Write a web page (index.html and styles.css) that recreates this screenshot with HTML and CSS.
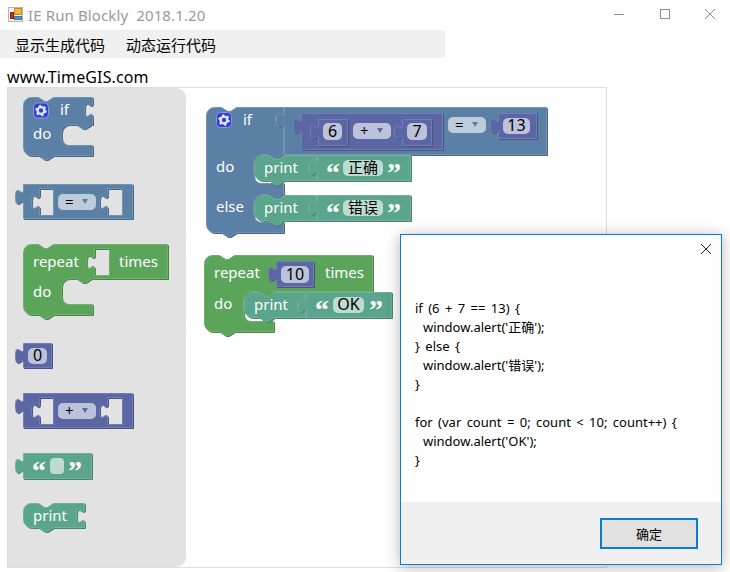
FILE: index.html
```html
<!DOCTYPE html>
<html lang="zh">
<head>
<meta charset="utf-8">
<title>IE Run Blockly</title>
<link rel="stylesheet" href="styles.css">
</head>
<body>
<div class="window">
  <header class="titlebar">
    <svg class="appicon" width="16" height="16" viewBox="0 0 16 16">
      <rect x="0.5" y="0.5" width="14" height="14" fill="#f4f4f4" stroke="#b5b5b5"/>
      <rect x="6.5" y="1.500" width="7" height="6" fill="#f0b93a" stroke="#c98a1c"/>
      <rect x="2.500" y="5.500" width="3" height="6" fill="#b3361c" stroke="#8e2a12"/>
      <rect x="6.5" y="9.500" width="7" height="3" fill="#4f8fdc" stroke="#3f70b0"/>
    </svg>
    <span class="apptitle">IE Run Blockly&nbsp; 2018.1.20</span>
    <div class="winbtns">
      <svg width="12" height="12" viewBox="0 0 12 12"><path d="M1 6.5H11" class="winstroke"/></svg>
      <svg width="12" height="12" viewBox="0 0 12 12"><rect x="1.5" y="1.5" width="9" height="9" class="winstroke"/></svg>
      <svg width="12" height="12" viewBox="0 0 12 12"><path d="M1 1L11 11M11 1L1 11" class="winstroke"/></svg>
    </div>
  </header>
  <nav class="menubar">
    <span class="menuitem">显示生成代码</span>
    <span class="menuitem">动态运行代码</span>
  </nav>
  <div class="site">www.TimeGIS.com</div>
  <div class="workspace">
    <svg class="canvas" width="598" height="479" viewBox="8 88 598 479">
      <defs>
        <g id="gear">
          <rect x="-7.5" y="-7.5" width="15" height="15" rx="4" class="gearbg"/>
          <circle r="3.4" class="gearring"/>
          <circle r="4.9" class="gearteeth"/>
        </g>
        <polygon id="tri" points="-3,0 3,0 0,5"/>
      </defs>

      <path class="flyout" d="M8,88 H176 a10,10 0 0 1 10,10 V557 a10,10 0 0 1 -10,10 H8 z"/>

      <!-- flyout -->
      <path class="blk blue" d="M23,105 a8,8 0 0 1 8,-8 h7 l6,4 3,0 6,-4 H92 v5 c0,10 -8,-8 -8,7.5 s8,-2.5 8,7.5 V124 H91 l-6,4 -3,0 -6,-4 H69 a8,8 0 0 0 -8,8 v5 a8,8 0 0 0 8,8 H92 V155 H53 l-6,4 -3,0 -6,-4 H31 a8,8 0 0 1 -8,-8 z"/>
      <use href="#gear" x="41" y="110.500"/>
      <text x="60" y="115" class="wt">if</text>
      <text x="33" y="139" class="wt">do</text>

      <path class="blk blue" fill-rule="evenodd" d="M23,184 H132 V218 H23 V204 c0,-10 -8,8 -8,-7.5 s8,2.5 8,-7.5 z M39,188 H53 V215 H39 V209 c0,-10 -8,8 -8,-7.5 s8,2.5 8,-7.5 z M107,188 H122 V215 H107 V209 c0,-10 -8,8 -8,-7.5 s8,2.5 8,-7.5 z"/>
      <rect x="58" y="194" width="38" height="16" rx="5" class="pill-blue"/>
      <text x="65" y="207" class="bk">=</text>
      <use href="#tri" x="85" y="199" class="tri-blue"/>

      <path class="blk green" fill-rule="evenodd" d="M23,252 a8,8 0 0 1 8,-8 h7 l6,4 3,0 6,-4 H167 V278 H91 l-6,4 -3,0 -6,-4 H69 a8,8 0 0 0 -8,8 v10 a8,8 0 0 0 8,8 H92 V314 H53 l-6,4 -3,0 -6,-4 H31 a8,8 0 0 1 -8,-8 z M94,248 H109 V275 H94 V269 c0,-10 -8,8 -8,-7.5 s8,2.5 8,-7.5 z"/>
      <text x="33" y="267" class="wt">repeat</text>
      <text x="119" y="267" class="wt">times</text>
      <text x="33" y="297" class="wt">do</text>

      <path class="blk purple" d="M23,343 H51 V367 H23 V363 c0,-10 -8,8 -8,-7.5 s8,2.5 8,-7.5 z"/>
      <rect x="28" y="348" width="19" height="16" rx="5" class="pill-purple"/>
      <text x="37.500" y="361" class="bk mid">0</text>

      <path class="blk purple" fill-rule="evenodd" d="M23,393 H132 V427 H23 V413 c0,-10 -8,8 -8,-7.5 s8,2.5 8,-7.5 z M39,397 H53 V424 H39 V418 c0,-10 -8,8 -8,-7.5 s8,2.5 8,-7.5 z M107,397 H122 V424 H107 V418 c0,-10 -8,8 -8,-7.5 s8,2.5 8,-7.5 z"/>
      <rect x="58" y="403" width="38" height="16" rx="5" class="pill-purple"/>
      <text x="65" y="416" class="bk">+</text>
      <use href="#tri" x="85" y="408" class="tri-purple"/>

      <path class="blk teal" d="M23,453 H91 V478 H23 V473 c0,-10 -8,8 -8,-7.5 s8,2.5 8,-7.5 z"/>
      <text x="32" y="480" class="qt">“</text>
      <rect x="50" y="458" width="14" height="16" rx="4" class="pill-teal"/>
      <text x="68" y="480" class="qt">”</text>

      <path class="blk teal" d="M23,511 a8,8 0 0 1 8,-8 h7 l6,4 3,0 6,-4 H84 v5 c0,10 -8,-8 -8,7.5 s8,-2.5 8,7.5 V527 H53 l-6,4 -3,0 -6,-4 H31 a8,8 0 0 1 -8,-8 z"/>
      <text x="33" y="521" class="wt">print</text>

      <!-- if / else -->
      <path class="blk blue" d="M206,115 a8,8 0 0 1 8,-8 h7 l6,4 3,0 6,-4 H283 v5 c0,10 -8,-8 -8,7.5 s8,-2.5 8,7.5 V154 H282 l-6,4 -3,0 -6,-4 H261 a8,8 0 0 0 -8,8 v13 a8,8 0 0 0 8,8 H283 V194 H282 l-6,4 -3,0 -6,-4 H261 a8,8 0 0 0 -8,8 v12 a8,8 0 0 0 8,8 H283 V232 H236 l-6,4 -3,0 -6,-4 H214 a8,8 0 0 1 -8,-8 z"/>
      <use href="#gear" x="224" y="120"/>
      <text x="243" y="125" class="wt">if</text>
      <text x="216" y="172" class="wt">do</text>
      <text x="216" y="212" class="wt">else</text>

      <path class="blk blue" d="M284,107 H546 V154 H284 V127 c0,-10 -8,8 -8,-7.5 s8,2.5 8,-7.5 z"/>
      <path class="blk purple" d="M301,113 H442 V149 H301 V133 c0,-10 -8,8 -8,-7.5 s8,2.5 8,-7.5 z"/>
      <path class="blk purple" d="M318,119 H347 V145 H318 V139 c0,-10 -8,8 -8,-7.5 s8,2.5 8,-7.5 z"/>
      <rect x="323" y="123" width="19" height="17" rx="5" class="pill-purple"/>
      <text x="332.500" y="137" class="bk mid">6</text>
      <rect x="353" y="123" width="38" height="16" rx="5" class="pill-purple"/>
      <text x="360" y="136" class="bk">+</text>
      <use href="#tri" x="380" y="128" class="tri-purple"/>
      <path class="blk purple" d="M402,119 H431 V145 H402 V139 c0,-10 -8,8 -8,-7.5 s8,2.5 8,-7.5 z"/>
      <rect x="407" y="123" width="20" height="17" rx="5" class="pill-purple"/>
      <text x="417" y="137" class="bk mid">7</text>
      <rect x="448" y="117" width="38" height="16" rx="5" class="pill-blue"/>
      <text x="455" y="130" class="bk">=</text>
      <use href="#tri" x="475" y="122" class="tri-blue"/>
      <path class="blk purple" d="M498,113 H536 V138 H498 V133 c0,-10 -8,8 -8,-7.5 s8,2.5 8,-7.5 z"/>
      <rect x="503" y="118" width="27" height="16" rx="5" class="pill-purple"/>
      <text x="516.500" y="131" class="bk mid">13</text>

      <path class="blk teal" d="M254,163 a8,8 0 0 1 8,-8 h7 l6,4 3,0 6,-4 H316 v5 c0,10 -8,-8 -8,7.5 s8,-2.5 8,7.5 V180 H284 l-6,4 -3,0 -6,-4 H262 a8,8 0 0 1 -8,-8 z"/>
      <text x="264" y="173" class="wt">print</text>
      <path class="blk teal" d="M317,155 H410 V180 H317 V175 c0,-10 -8,8 -8,-7.5 s8,2.5 8,-7.5 z"/>
      <text x="326" y="182" class="qt">“</text>
      <rect x="343" y="160" width="40" height="16" rx="5" class="pill-teal"/>
      <text x="363" y="173" class="bk mid cjk">正确</text>
      <text x="387" y="182" class="qt">”</text>

      <path class="blk teal" d="M254,203 a8,8 0 0 1 8,-8 h7 l6,4 3,0 6,-4 H316 v5 c0,10 -8,-8 -8,7.5 s8,-2.5 8,7.5 V220 H284 l-6,4 -3,0 -6,-4 H262 a8,8 0 0 1 -8,-8 z"/>
      <text x="264" y="213" class="wt">print</text>
      <path class="blk teal" d="M317,195 H410 V220 H317 V215 c0,-10 -8,8 -8,-7.5 s8,2.5 8,-7.5 z"/>
      <text x="326" y="222" class="qt">“</text>
      <rect x="343" y="200" width="40" height="16" rx="5" class="pill-teal"/>
      <text x="363" y="213" class="bk mid cjk">错误</text>
      <text x="387" y="222" class="qt">”</text>

      <!-- repeat -->
      <path class="blk green" d="M204,263 a8,8 0 0 1 8,-8 h7 l6,4 3,0 6,-4 H372 V291 H273 l-6,4 -3,0 -6,-4 H251 a8,8 0 0 0 -8,8 v14 a8,8 0 0 0 8,8 H273 V331 H234 l-6,4 -3,0 -6,-4 H212 a8,8 0 0 1 -8,-8 z"/>
      <text x="214" y="278" class="wt">repeat</text>
      <text x="325" y="278" class="wt">times</text>
      <text x="214" y="309" class="wt">do</text>
      <path class="blk purple" d="M276,261 H313 V286 H276 V281 c0,-10 -8,8 -8,-7.5 s8,2.5 8,-7.5 z"/>
      <rect x="281" y="266" width="28" height="17" rx="5" class="pill-purple"/>
      <text x="295" y="280" class="bk mid">10</text>
      <path class="blk teal" d="M244,300 a8,8 0 0 1 8,-8 h7 l6,4 3,0 6,-4 H305 v5 c0,10 -8,-8 -8,7.5 s8,-2.5 8,7.5 V317 H274 l-6,4 -3,0 -6,-4 H252 a8,8 0 0 1 -8,-8 z"/>
      <text x="254" y="310" class="wt">print</text>
      <path class="blk teal" d="M306,292 H391 V317 H306 V312 c0,-10 -8,8 -8,-7.5 s8,2.5 8,-7.5 z"/>
      <text x="315" y="319" class="qt">“</text>
      <rect x="333" y="297" width="31" height="16" rx="5" class="pill-teal"/>
      <text x="348.500" y="310" class="bk mid">OK</text>
      <text x="369" y="319" class="qt">”</text>
    </svg>
  </div>

  <div class="dialog">
    <svg class="dlgclose" width="12" height="12" viewBox="0 0 12 12"><path d="M1 1L11 11M11 1L1 11"/></svg>
    <div class="dlgtext">
      <div class="line">if (6 + 7 == 13) {</div>
      <div class="line ind">window.alert('正确');</div>
      <div class="line">} else {</div>
      <div class="line ind">window.alert('错误');</div>
      <div class="line">}</div>
      <div class="line gap">for (var count = 0; count &lt; 10; count++) {</div>
      <div class="line ind">window.alert('OK');</div>
      <div class="line">}</div>
    </div>
    <div class="dlgfoot"><button class="okbtn">确定</button></div>
  </div>
</div>
</body>
</html>
```
FILE: styles.css
```css
* { box-sizing: border-box; }
html, body { margin: 0; padding: 0; background: #fff; overflow: hidden; }
body { font-family: "Noto Sans", "Noto Sans CJK SC", sans-serif; }
.window { position: relative; width: 730px; height: 572px; display: flex; flex-direction: column; }

.titlebar { height: 30px; display: flex; align-items: center; padding-left: 8px; }
.appicon { flex: none; }
.apptitle { margin-left: 4px; font-size: 15px; letter-spacing: .12px; color: #999; white-space: pre; }
.winbtns { margin-left: auto; align-self: flex-start; display: flex; gap: 33.5px; padding: 8px 14px 0 0; }
.winstroke { fill: none; stroke: #8c8c8c; stroke-width: 1; }

.menubar { width: 445px; height: 28px; background: #f0f0f0; display: flex; align-items: center; gap: 21px; padding-left: 15px; }
.menuitem { font-size: 15px; color: #000; }

.site { height: 29px; padding: 9px 0 0 7px; font-size: 16px; letter-spacing: .13px; line-height: 20px; color: #000; }

.workspace { width: 600px; height: 481px; margin-left: 7px; border: 1px solid #ddd; background: #fff; }
.canvas { display: block; }
.flyout { fill: #e2e2e2; }

.blk { stroke-width: 1; transform: translate(.5px, .5px); }
.blue { fill: #5b80a5; stroke: #7392b1; filter: drop-shadow(1px 1px 0 #496684); }
.green { fill: #5ba55b; stroke: #72b072; filter: drop-shadow(1px 1px 0 #498449); }
.purple { fill: #5b67a5; stroke: #737db1; filter: drop-shadow(1px 1px 0 #495284); }
.teal { fill: #5ba58c; stroke: #72b09b; filter: drop-shadow(1px 1px 0 #498470); }

.wt, .bk { font-family: "Noto Sans", "Noto Sans CJK SC", sans-serif; font-size: 15px; }
.wt { fill: #fff; }
.bk { fill: #000; }
.mid { text-anchor: middle; font-size: 16px; }
.cjk { font-size: 15px; }
.qt { font-family: "Liberation Serif", serif; font-weight: bold; font-size: 28px; fill: #fff; }

.pill-blue { fill: #bdccdb; }
.pill-purple { fill: #bdc2db; }
.pill-teal { fill: #bddbd1; }
.tri-blue { fill: #5b80a5; }
.tri-purple { fill: #5b67a5; }

.gearbg { fill: #2f3fdc; stroke: #8c9ad0; stroke-width: 1; }
.gearring { fill: none; stroke: #e4e8f8; stroke-width: 2.4; }
.gearteeth { fill: none; stroke: #e4e8f8; stroke-width: 1.8; stroke-dasharray: 2.2 2.93; }

.dialog { position: absolute; left: 400px; top: 234px; width: 322px; height: 331px; background: #fff; border: 1px solid #0a7cd6; box-shadow: 0 2px 14px rgba(0,0,0,.3); display: flex; flex-direction: column; }
.dlgclose { position: absolute; right: 9px; top: 8px; fill: none; stroke: #1a1a1a; stroke-width: 1; }
.dlgtext { flex: 1; padding: 64px 0 0 14px; font-size: 13px; line-height: 19px; word-spacing: 2px; color: #000; }
.ind { padding-left: 8px; }
.gap { margin-top: 19px; }
.dlgfoot { height: 62px; background: #f0f0f0; display: flex; justify-content: flex-end; align-items: flex-start; padding: 16px 23px 0 0; }
.okbtn { width: 98px; height: 31px; border: 2px solid #0a7cd6; background: #e1e1e1; font-family: "Noto Sans CJK SC", sans-serif; font-size: 13px; color: #000; padding: 0; }
```
